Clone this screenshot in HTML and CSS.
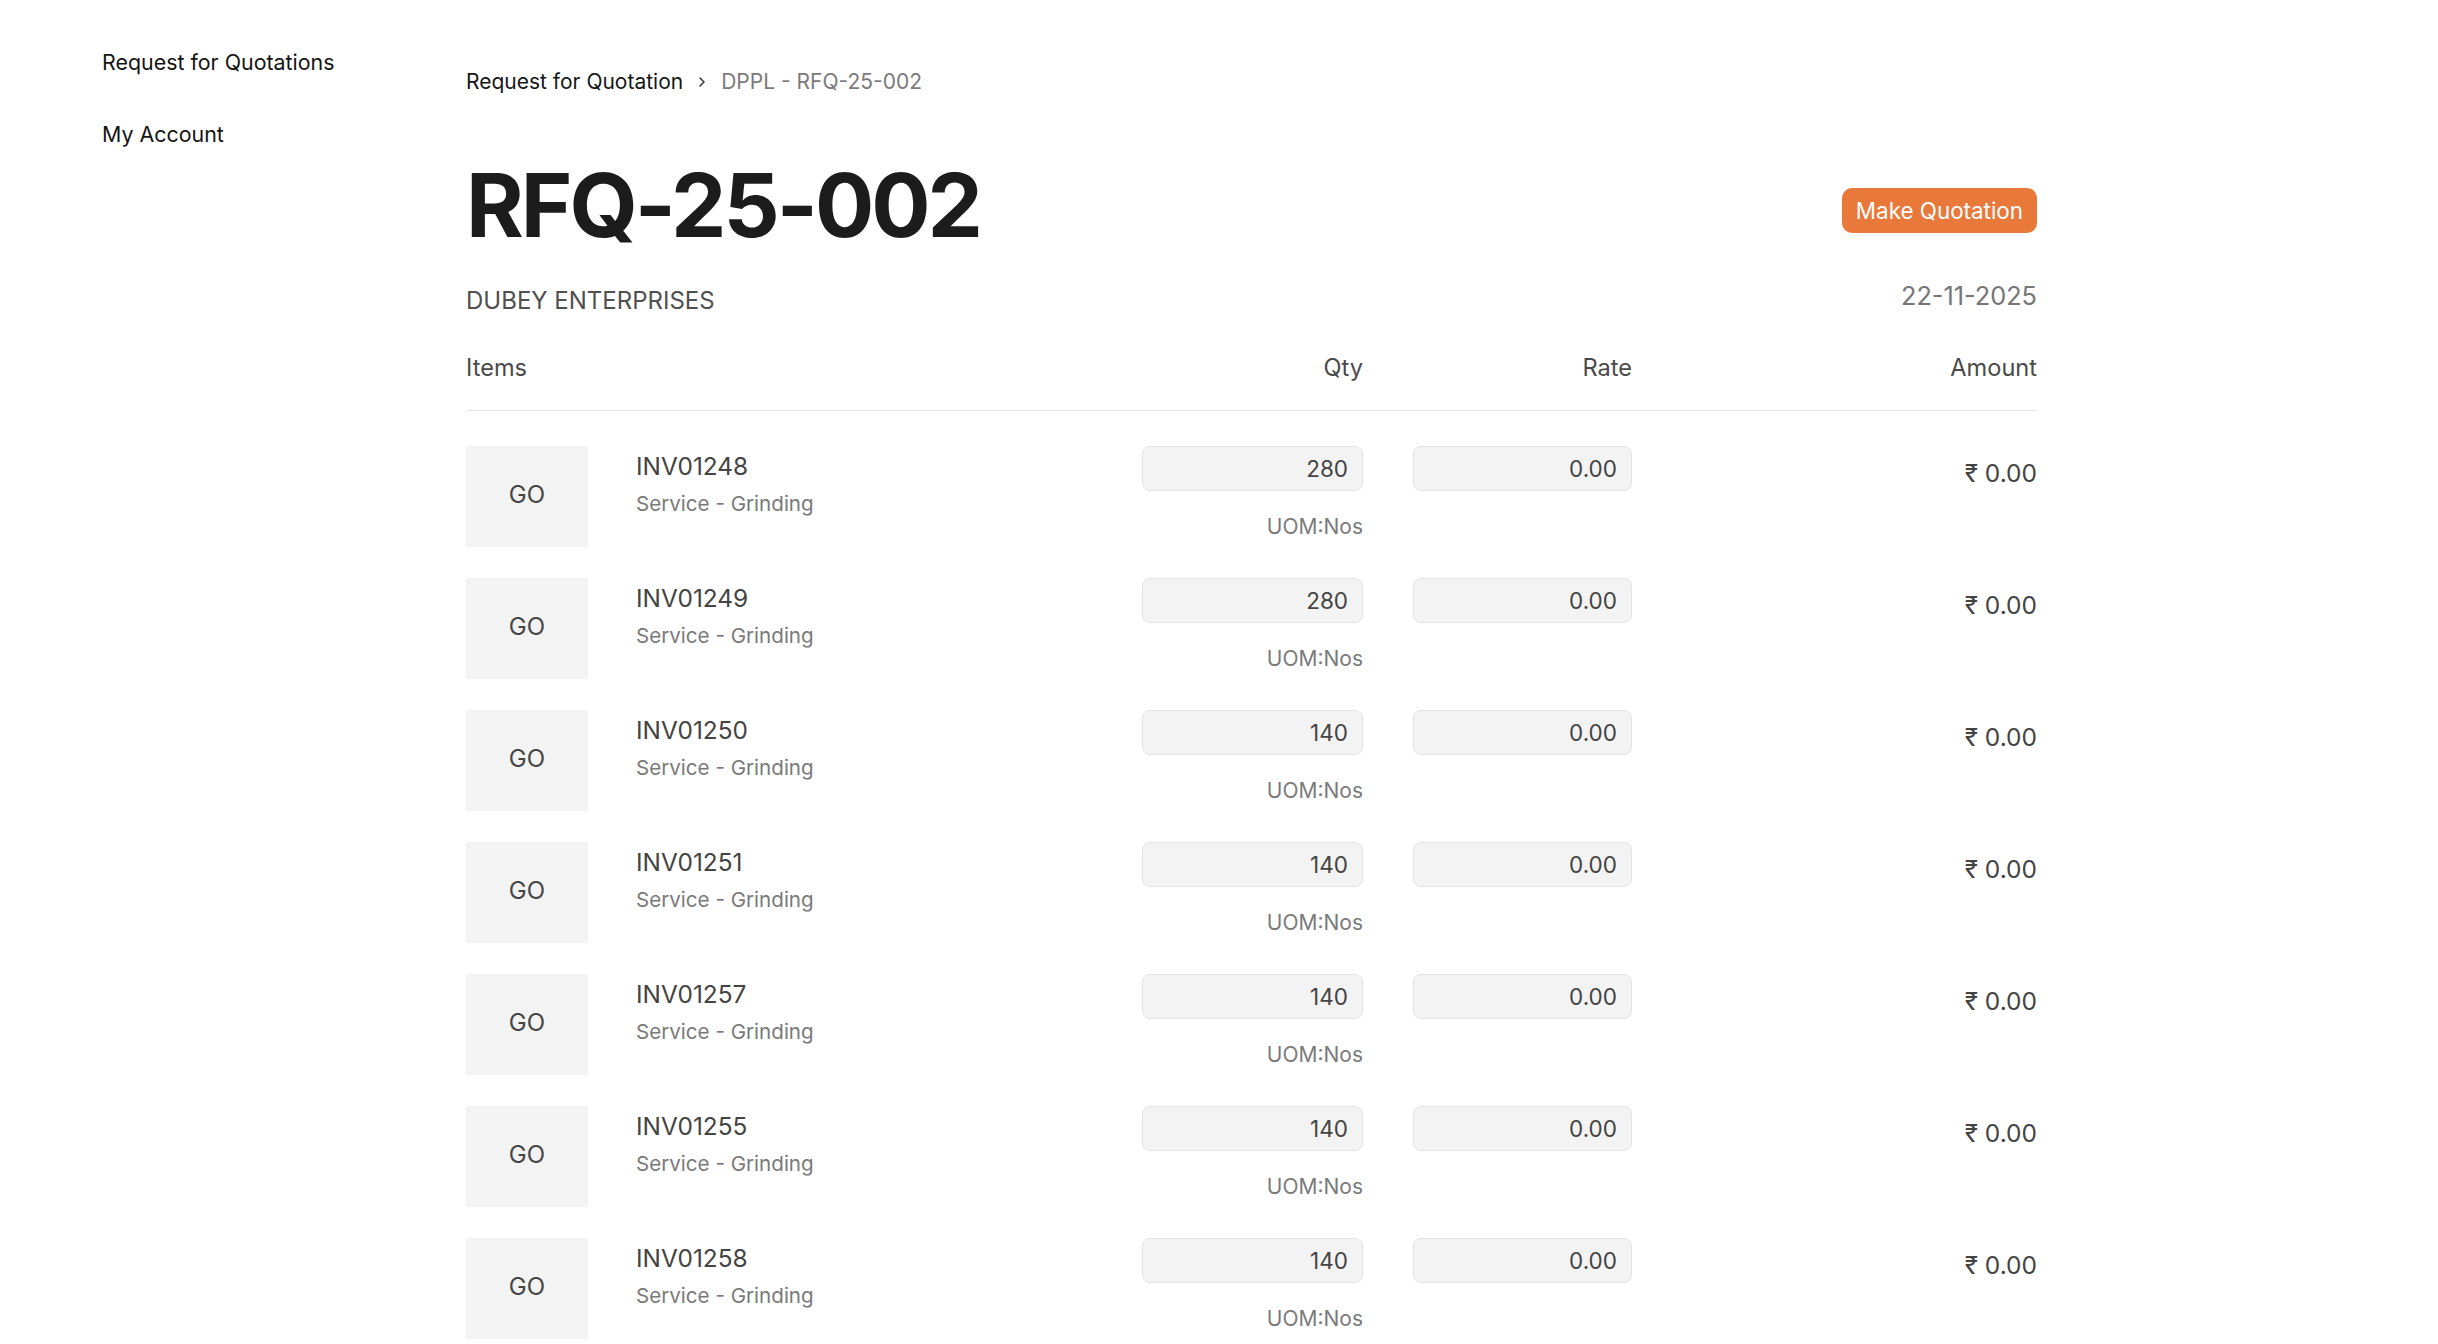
FILE: index.html
```html
<!DOCTYPE html>
<html lang="en">
<head>
<meta charset="utf-8">
<title>RFQ-25-002</title>
<link rel="stylesheet" href="styles.css">
</head>
<body>
<div class="page">
  <aside class="sidebar">
    <a class="side-link" href="#">Request for Quotations</a>
    <a class="side-link" href="#">My Account</a>
  </aside>
  <main class="main">
    <nav class="breadcrumb">
      <a class="crumb" href="#">Request for Quotation</a>
      <svg class="chev" width="10" height="12" viewBox="0 0 10 12"><path d="M3 2 L7 6 L3 10" fill="none" stroke="#333" stroke-width="1.5" stroke-linecap="round" stroke-linejoin="round"/></svg>
      <span class="crumb-current">DPPL - RFQ-25-002</span>
    </nav>
    <div class="title-row">
      <h1 class="title">RFQ-25-002</h1>
      <button class="btn-primary">Make Quotation</button>
    </div>
    <div class="meta-row">
      <div class="supplier">DUBEY ENTERPRISES</div>
      <div class="date">22-11-2025</div>
    </div>
    <div class="grid head">
      <div class="th">Items</div>
      <div class="th right">Qty</div>
      <div class="th right">Rate</div>
      <div class="th right">Amount</div>
    </div>
    <div class="rows">
      <div class="grid row">
        <div class="item"><div class="thumb">GO</div><div class="item-text"><div class="item-code">INV01248</div><div class="item-name">Service - Grinding</div></div></div>
        <div class="qty"><input class="field" value="280" readonly><div class="uom">UOM:Nos</div></div>
        <div><input class="field" value="0.00" readonly></div>
        <div class="amount">₹ 0.00</div>
      </div>
      <div class="grid row">
        <div class="item"><div class="thumb">GO</div><div class="item-text"><div class="item-code">INV01249</div><div class="item-name">Service - Grinding</div></div></div>
        <div class="qty"><input class="field" value="280" readonly><div class="uom">UOM:Nos</div></div>
        <div><input class="field" value="0.00" readonly></div>
        <div class="amount">₹ 0.00</div>
      </div>
      <div class="grid row">
        <div class="item"><div class="thumb">GO</div><div class="item-text"><div class="item-code">INV01250</div><div class="item-name">Service - Grinding</div></div></div>
        <div class="qty"><input class="field" value="140" readonly><div class="uom">UOM:Nos</div></div>
        <div><input class="field" value="0.00" readonly></div>
        <div class="amount">₹ 0.00</div>
      </div>
      <div class="grid row">
        <div class="item"><div class="thumb">GO</div><div class="item-text"><div class="item-code">INV01251</div><div class="item-name">Service - Grinding</div></div></div>
        <div class="qty"><input class="field" value="140" readonly><div class="uom">UOM:Nos</div></div>
        <div><input class="field" value="0.00" readonly></div>
        <div class="amount">₹ 0.00</div>
      </div>
      <div class="grid row">
        <div class="item"><div class="thumb">GO</div><div class="item-text"><div class="item-code">INV01257</div><div class="item-name">Service - Grinding</div></div></div>
        <div class="qty"><input class="field" value="140" readonly><div class="uom">UOM:Nos</div></div>
        <div><input class="field" value="0.00" readonly></div>
        <div class="amount">₹ 0.00</div>
      </div>
      <div class="grid row">
        <div class="item"><div class="thumb">GO</div><div class="item-text"><div class="item-code">INV01255</div><div class="item-name">Service - Grinding</div></div></div>
        <div class="qty"><input class="field" value="140" readonly><div class="uom">UOM:Nos</div></div>
        <div><input class="field" value="0.00" readonly></div>
        <div class="amount">₹ 0.00</div>
      </div>
      <div class="grid row">
        <div class="item"><div class="thumb">GO</div><div class="item-text"><div class="item-code">INV01258</div><div class="item-name">Service - Grinding</div></div></div>
        <div class="qty"><input class="field" value="140" readonly><div class="uom">UOM:Nos</div></div>
        <div><input class="field" value="0.00" readonly></div>
        <div class="amount">₹ 0.00</div>
      </div>
    </div>
  </main>
</div>
</body>
</html>
```

FILE: styles.css
```css
html, body {
  margin: 0;
  padding: 0;
  overflow: hidden;
  background: #ffffff;
}
body {
  font-family: Inter, "DejaVu Sans", "Noto Sans", sans-serif;
  color: #1a1a1a;
}
.page {
  display: flex;
  align-items: flex-start;
}
.sidebar {
  flex: none;
  width: 364px;
  padding: 48px 0 0 102px;
  display: flex;
  flex-direction: column;
  gap: 44px;
}
.side-link {
  font-size: 21.4px;
  line-height: 28px;
  color: #141414;
  text-decoration: none;
}
.main {
  flex: none;
  width: 1571px;
  padding-top: 68px;
}
.breadcrumb {
  display: flex;
  align-items: center;
  font-size: 21px;
  line-height: 28px;
}
.crumb {
  color: #161616;
  text-decoration: none;
}
.chev {
  margin: 0 14px 0 14px;
}
.crumb-current {
  color: #7a7a7a;
}
.title-row {
  display: flex;
  justify-content: space-between;
  align-items: flex-start;
  margin-top: 56px;
}
.title {
  margin: 0;
  font-size: 88px;
  line-height: 106px;
  font-weight: 700;
  color: #1c1c1c;
  letter-spacing: -3px;
}
.btn-primary {
  margin-top: 36px;
  height: 45px;
  padding: 0 14px;
  border: none;
  border-radius: 10px;
  background: #e8793a;
  color: #ffffff;
  font-family: inherit;
  font-size: 22.4px;
}
.meta-row {
  display: flex;
  justify-content: space-between;
  align-items: flex-start;
  margin-top: 27px;
}
.supplier {
  font-size: 24px;
  line-height: 32px;
  color: #505050;
}
.date {
  font-size: 25.3px;
  line-height: 32px;
  color: #767676;
  margin-top: -5px;
}
.grid {
  display: grid;
  grid-template-columns: 1fr 221px 219px 355px;
  column-gap: 50px;
}
.head {
  margin-top: 36px;
  padding-bottom: 27px;
  border-bottom: 1px solid #e6e6e6;
}
.th {
  font-size: 23.6px;
  line-height: 30px;
  color: #4a4a4a;
}
.right {
  text-align: right;
}
.rows {
  padding-top: 35px;
  display: flex;
  flex-direction: column;
  gap: 31px;
}
.item {
  display: flex;
  align-items: flex-start;
  gap: 48px;
}
.thumb {
  flex: none;
  width: 122px;
  height: 101px;
  padding-bottom: 4px;
  box-sizing: border-box;
  background: #f3f3f3;
  display: flex;
  align-items: center;
  justify-content: center;
  font-size: 24px;
  color: #454545;
}
.item-text {
  padding-top: 4px;
}
.item-code {
  font-size: 24.4px;
  line-height: 32px;
  color: #444444;
}
.item-name {
  margin-top: 8px;
  font-size: 20.6px;
  line-height: 28px;
  color: #7a7a7a;
}
.qty {
  display: flex;
  flex-direction: column;
  align-items: flex-end;
}
.field {
  box-sizing: border-box;
  width: 100%;
  height: 45px;
  margin: 0;
  padding: 0 14px;
  border: 1px solid #e3e3e3;
  border-radius: 8px;
  background: #f3f3f3;
  font-family: inherit;
  font-size: 22.5px;
  color: #444444;
  text-align: right;
  outline: none;
}
.uom {
  margin-top: 22px;
  font-size: 21px;
  line-height: 28px;
  color: #7a7a7a;
}
.amount {
  padding-top: 11px;
  text-align: right;
  font-size: 24.5px;
  line-height: 32px;
  color: #444444;
}
```
